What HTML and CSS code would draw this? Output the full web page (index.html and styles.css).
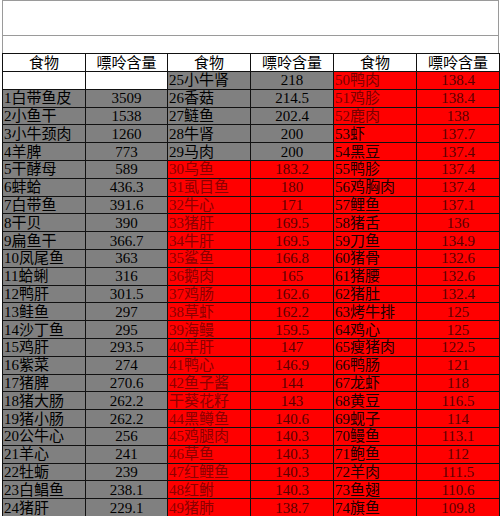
FILE: index.html
```html
<!DOCTYPE html>
<html lang="zh">
<head>
<meta charset="utf-8">
<link rel="stylesheet" href="styles.css">
</head>
<body>
<div class="sheet">
  <div class="title-row"></div>
  <div class="sub-row"></div>
  <table class="grid">
    <colgroup>
      <col class="c1"><col class="c2"><col class="c3"><col class="c4"><col class="c5"><col class="c6">
    </colgroup>
    <thead>
      <tr class="head">
        <th>食物</th><th>嘌呤含量</th><th>食物</th><th>嘌呤含量</th><th>食物</th><th>嘌呤含量</th>
      </tr>
    </thead>
    <tbody id="body"></tbody>
  </table>
</div>
<script src="app.js"></script>
</body>
</html>
```
FILE: app.js
```js
const col1 = [["",""],["1白带鱼皮","3509"],["2小鱼干","1538"],["3小牛颈肉","1260"],["4羊脾","773"],["5干酵母","589"],["6蚌蛤","436.3"],["7白带鱼","391.6"],["8干贝","390"],["9扁鱼干","366.7"],["10凤尾鱼","363"],["11蛤蜊","316"],["12鸭肝","301.5"],["13鲑鱼","297"],["14沙丁鱼","295"],["15鸡肝","293.5"],["16紫菜","274"],["17猪脾","270.6"],["18猪大肠","262.2"],["19猪小肠","262.2"],["20公牛心","256"],["21羊心","241"],["22牡蛎","239"],["23白鲳鱼","238.1"],["24猪肝","229.1"]];
const col2 = [["25小牛肾","218"],["26香菇","214.5"],["27鲢鱼","202.4"],["28牛肾","200"],["29马肉","200"],["30乌鱼","183.2"],["31虱目鱼","180"],["32牛心","171"],["33猪肝","169.5"],["34牛肝","169.5"],["35鲨鱼","166.8"],["36鹅肉","165"],["37鸡肠","162.6"],["38草虾","162.2"],["39海鳗","159.5"],["40羊肝","147"],["41鸭心","146.9"],["42鱼子酱","144"],["干葵花籽","143"],["44黑鳟鱼","140.6"],["45鸡腿肉","140.3"],["46草鱼","140.3"],["47红鲤鱼","140.3"],["48红鲋","140.3"],["49猪肺","138.7"]];
const col3 = [["50鸭肉","138.4"],["51鸡胗","138.4"],["52鹿肉","138"],["53虾","137.7"],["54黑豆","137.4"],["55鸭胗","137.4"],["56鸡胸肉","137.4"],["57鲤鱼","137.1"],["58猪舌","136"],["59刀鱼","134.9"],["60猪骨","132.6"],["61猪腰","132.6"],["62猪肚","132.4"],["63烤牛排","125"],["64鸡心","125"],["65瘦猪肉","122.5"],["66鸭肠","121"],["67龙虾","118"],["68黄豆","116.5"],["69蚬子","114"],["70鳗鱼","113.1"],["71鲍鱼","112"],["72羊肉","111.5"],["73鱼翅","110.6"],["74旗鱼","109.8"]];
const body = document.getElementById("body");
let html = "";
for (let i = 0; i < 25; i++) {
  const a = col1[i], b = col2[i], c = col3[i];
  const aCls = i === 0 ? "blank" : "gray";
  const bCls = i < 5 ? "gray" : "red";
  const cName = i < 3 ? "red name-mid" : "red name-dark";
  html += "<tr>" +
    `<td class="${aCls} name">${a[0]}</td>` +
    `<td class="${aCls} num">${a[1]}</td>` +
    `<td class="${bCls} name${i >= 5 ? " name-red" : ""}">${b[0]}</td>` +
    `<td class="${bCls} num${i >= 5 ? " num-red" : ""}">${b[1]}</td>` +
    `<td class="${cName} name">${c[0]}</td>` +
    `<td class="red num num-red">${c[1]}</td>` +
    "</tr>";
}
body.innerHTML = html;
```
FILE: styles.css
```css
html, body {
  margin: 0;
  padding: 0;
  background: #ffffff;
}
.sheet {
  width: 500px;
  height: 516px;
  overflow: hidden;
  padding-left: 2px;
  box-sizing: border-box;
}
.title-row {
  width: 495px;
  height: 34px;
  border: 1px solid #9a9a9a;
}
.sub-row {
  height: 17px;
  width: 495px;
  border-left: 1px solid #9a9a9a;
  border-right: 1px solid #9a9a9a;
}
.grid {
  border-collapse: collapse;
  table-layout: fixed;
  width: 497px;
  font-family: "Liberation Serif", "Noto Sans CJK SC", serif;
  font-size: 15px;
  color: #000;
}
.c1 { width: 83px; }
.c2 { width: 82px; }
.c3 { width: 83px; }
.c4 { width: 83px; }
.c5 { width: 83px; }
.c6 { width: 83px; }
.grid th, .grid td {
  border: 1px solid #111;
  padding: 0;
  height: 16.8px;
  line-height: 16px;
  white-space: nowrap;
  overflow: hidden;
}
.grid th {
  font-weight: normal;
  background: #ffffff;
  text-align: center;
  height: 17px;
}
.name {
  text-align: left;
  padding-left: 1px !important;
}
.num {
  text-align: center;
}
.blank { background: #ffffff; }
.gray { background: #808080; color: #000; }
.red { background: #ff0000; }
.name-red { color: #8c0000; }
.num-red { color: #5a0000; }
.name-mid { color: #7a0000; }
.name-dark { color: #200000; }
```
